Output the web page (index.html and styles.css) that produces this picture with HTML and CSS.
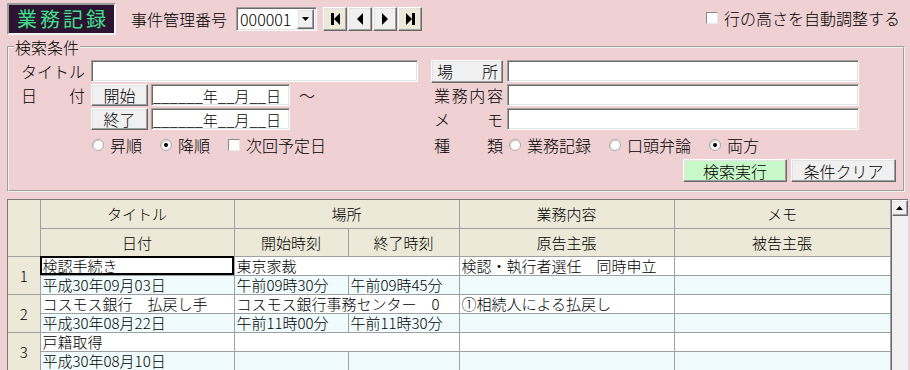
FILE: index.html
```html
<!DOCTYPE html>
<html lang="ja">
<head>
<meta charset="UTF-8" />
<title>業務記録</title>
<link rel="stylesheet" href="styles.css">
</head>
<body>

<!-- ===== 上部バー ===== -->
<header class="topbar">
  <div class="logo">業務記録</div>
  <span class="case-label">事件管理番号</span>
  <div class="combo">
    <span class="combo-value">000001</span>
    <span class="combo-btn"><svg width="7" height="4" viewBox="0 0 7 4"><polygon points="0,0 7,0 3.5,4"/></svg></span>
  </div>
  <div class="nav">
    <button class="nav-btn edge" title="最初"><svg width="9" height="12" viewBox="0 0 9 12"><rect x="0" y="0" width="3" height="12"/><polygon points="9,0 3,6 9,12"/></svg></button>
    <button class="nav-btn" title="前"><svg width="6" height="12" viewBox="0 0 6 12"><polygon points="6,0 0,6 6,12"/></svg></button>
    <button class="nav-btn" title="次"><svg width="6" height="12" viewBox="0 0 6 12"><polygon points="0,0 6,6 0,12"/></svg></button>
    <button class="nav-btn edge" title="最後"><svg width="9" height="12" viewBox="0 0 9 12"><polygon points="0,0 6,6 0,12"/><rect x="6" y="0" width="3" height="12"/></svg></button>
  </div>
  <label class="auto-height"><span class="check"></span>行の高さを自動調整する</label>
</header>

<!-- ===== 検索条件 ===== -->
<fieldset class="search">
  <legend>検索条件</legend>
  <div class="search-grid">
    <div class="lbl">タイトル</div>
    <div><input class="field w-title" type="text"></div>
    <button class="btn place">場所</button>
    <div><input class="field w-wide" type="text"></div>

    <div class="lbl">日付</div>
    <div class="date-row">
      <button class="btn date-btn">開始</button>
      <input class="field w-date" type="text" value="______年__月__日">
      <span class="tilde">～</span>
    </div>
    <div class="lbl-r">業務内容</div>
    <div><input class="field w-wide" type="text"></div>

    <div></div>
    <div class="date-row">
      <button class="btn date-btn">終了</button>
      <input class="field w-date" type="text" value="______年__月__日">
    </div>
    <div class="lbl-r">メモ</div>
    <div><input class="field w-wide" type="text"></div>

    <div></div>
    <div class="opts left">
      <span class="opt"><span class="radio"></span>昇順</span>
      <span class="opt"><span class="radio on"></span>降順</span>
      <span class="opt"><span class="check"></span>次回予定日</span>
    </div>
    <div class="lbl-r">種類</div>
    <div class="opts right">
      <span class="opt"><span class="radio"></span>業務記録</span>
      <span class="opt"><span class="radio"></span>口頭弁論</span>
      <span class="opt"><span class="radio on"></span>両方</span>
    </div>

    <div class="actions">
      <button class="btn btn-search">検索実行</button>
      <button class="btn btn-clear">条件クリア</button>
    </div>
  </div>
</fieldset>

<!-- ===== 一覧 ===== -->
<div class="grid-wrap">
  <table class="records">
    <colgroup>
      <col style="width:32px"><col style="width:194px"><col style="width:114px">
      <col style="width:111px"><col style="width:215px"><col style="width:216px">
    </colgroup>
    <thead>
      <tr><th class="rowno" rowspan="2"></th><th>タイトル</th><th colspan="2">場所</th><th>業務内容</th><th>メモ</th></tr>
      <tr><th>日付</th><th>開始時刻</th><th>終了時刻</th><th>原告主張</th><th>被告主張</th></tr>
    </thead>
    <tbody>
      <tr class="line1"><th class="rowno" rowspan="2">1</th><td class="sel">検認手続き</td><td colspan="2">東京家裁</td><td>検認・執行者選任　同時申立</td><td></td></tr>
      <tr class="line2"><td>平成30年09月03日</td><td>午前09時30分</td><td>午前09時45分</td><td></td><td></td></tr>
      <tr class="line1"><th class="rowno" rowspan="2">2</th><td>コスモス銀行　払戻し手</td><td colspan="2">コスモス銀行事務センター　0</td><td>①相続人による払戻し</td><td></td></tr>
      <tr class="line2"><td>平成30年08月22日</td><td>午前11時00分</td><td>午前11時30分</td><td></td><td></td></tr>
      <tr class="line1"><th class="rowno" rowspan="2">3</th><td>戸籍取得</td><td colspan="2"></td><td></td><td></td></tr>
      <tr class="line2"><td>平成30年08月10日</td><td></td><td></td><td></td><td></td></tr>
    </tbody>
  </table>
  <div class="vscroll">
    <span class="vscroll-up"><svg width="7" height="4" viewBox="0 0 7 4"><polygon points="3.5,0 7,4 0,4"/></svg></span>
  </div>
</div>

</body>
</html>
```
FILE: styles.css
```css
/* ---------- reset ---------- */
*
{
  box-sizing:border-box;
  margin:0;
  padding:0;
}
html,body
{
  width:910px;
  height:370px;
  overflow:hidden;
}
body
{
  background:#efd0d3;
  font-family:"Noto Sans CJK JP","Noto Sans CJK SC",sans-serif;
  font-size:16px;
  font-weight:300;
  line-height:1;
  color:#000;
}
button,input{font:inherit;color:inherit;}

/* ===== 共通：くぼみ / 浮き ===== */
.field,.combo
{
  background:#fff;
  border:1px solid;
  border-color:#a0a0a0 #fff #fff #a0a0a0;
  box-shadow:inset 1px 1px 0 #696969,inset -1px -1px 0 #e3e3e3;
  outline:none;
}
.btn,.nav-btn,.combo-btn,.vscroll-up
{
  background:#f0f0f0;
  border:1px solid;
  border-color:#fff #696969 #696969 #fff;
  box-shadow:inset -1px -1px 0 #a0a0a0,inset 1px 1px 0 #e3e3e3;
  cursor:pointer;
}

/* ===== 上部バー ===== */
.topbar
{
  display:flex;
  align-items:center;
  height:38px;
  padding:0 10px 0 7px;
}
.logo
{
  width:109px;
  height:32px;
  display:flex;
  align-items:center;
  justify-content:center;
  padding-left:3px;
  background:#2b1331;
  color:#3fe08c;
  font-size:20px;
  font-weight:400;
  letter-spacing:3px;
  border:2px solid;
  border-color:#9a9a9a #f4f4f4 #f4f4f4 #9a9a9a;
}
.case-label{margin-left:15px;}
.combo
{
  margin-left:9px;
  width:81px;
  height:24px;
  display:flex;
  align-items:center;
  padding:1px 2px 1px 2px;
}
.combo-value{flex:1;padding-left:1px;}
.combo-btn
{
  width:17px;
  height:20px;
  display:flex;
  align-items:center;
  justify-content:center;
}
.nav
{
  display:flex;
  gap:1px;
  margin-left:6px;
}
.nav-btn
{
  width:24px;
  height:24px;
  display:flex;
  align-items:center;
  justify-content:center;
}
.nav-btn.edge{background:#ece9d8;}
.auto-height
{
  margin-left:auto;
  margin-bottom:3px;
  display:flex;
  align-items:center;
  gap:6px;
}
.check
{
  display:inline-block;
  flex:none;
  width:12px;
  height:12px;
  background:#fff;
  border:1px solid;
  border-color:#8a8a8a #e8e8e8 #e8e8e8 #8a8a8a;
}

/* ===== 検索条件 ===== */
.search
{
  margin:0 5px 0 7px;
  padding:3px 7px 8px 5px;
  border:2px groove #f2f2f2;
}
.search legend
{
  padding:0 1px;
  line-height:18px;
}
.search-grid
{
  display:grid;
  grid-template-columns:77px 340px 76px 1fr;
  grid-template-rows:24px 24px 24px 28px 23px;
  align-items:center;
}
.lbl
{
  padding:0 6px 0 7px;
  white-space:nowrap;
  text-align-last:justify;
}
.lbl-r
{
  padding:0 4px 0 3px;
  white-space:nowrap;
  text-align-last:justify;
}
.field{display:block;height:22px;padding:0 2px;}
.w-title{width:327px;}
.w-wide{width:352px;}
.w-date
{
  width:139px;
  margin-left:3px;
  padding:0 1px;
  font-size:15px;
}
.btn.place
{
  width:72px;
  height:23px;
  padding:0 4px 0 5px;
  text-align-last:justify;
}
.date-row
{
  display:flex;
  align-items:center;
}
.date-btn{width:57px;height:22px;flex:none;}
.tilde{margin-left:9px;}

.opts
{
  display:flex;
  align-items:center;
  white-space:nowrap;
}
.opts.left{padding-left:1px;}
.opts.right{padding-left:2px;}
.opt
{
  display:flex;
  align-items:center;
  gap:6px;
  margin-right:18px;
}
.radio
{
  position:relative;
  flex:none;
  width:12px;
  height:12px;
  border-radius:50%;
  background:#fff;
  border:1px solid #a8a8a8;
  box-shadow:inset 1px 1px 0 #d8d8d8;
}
.radio.on{background:#f4f4f4;}
.radio.on::after
{
  content:"";
  position:absolute;
  left:3px;
  top:3px;
  width:4px;
  height:4px;
  border-radius:50%;
  background:#000;
}
.actions
{
  grid-column:1 / -1;
  justify-self:end;
  display:flex;
  gap:4px;
}
.actions .btn{height:23px;}
.btn-search{width:104px;background:#c8f7c8;}
.btn-clear{width:105px;}

/* ===== 一覧 ===== */
.grid-wrap
{
  display:flex;
  align-items:flex-start;
  margin:7px 2px 0 7px;
  height:180px;
  border:1px solid #7a7a7a;
  background:#fff;
}
.records
{
  width:882px;
  flex:none;
  table-layout:fixed;
  border-collapse:collapse;
  font-size:15px;
}
.records th,.records td
{
  border:1px solid #a0a0a0;
  padding:0 2px;
  white-space:nowrap;
  overflow:hidden;
  line-height:17px;
  text-align:left;
  font-weight:300;
}
.records thead tr{height:28px;}
.records tbody tr{height:19px;}
.records th
{
  background:#ece9d8;
  text-align:center;
}
.records thead tr:first-child th{border-top:0;}
.records .rowno{border-left:0;}
.line1 td{background:#fff;}
.line2 td{background:#f0fbfd;}
.sel
{
  outline:2px solid #000;
  outline-offset:-2px;
}
.vscroll
{
  flex:none;
  align-self:stretch;
  width:17px;
  border-left:1px solid #6a6a6a;
  background:#f0f0f0;
}
.vscroll-up
{
  display:flex;
  align-items:center;
  justify-content:center;
  height:16px;
}
```
